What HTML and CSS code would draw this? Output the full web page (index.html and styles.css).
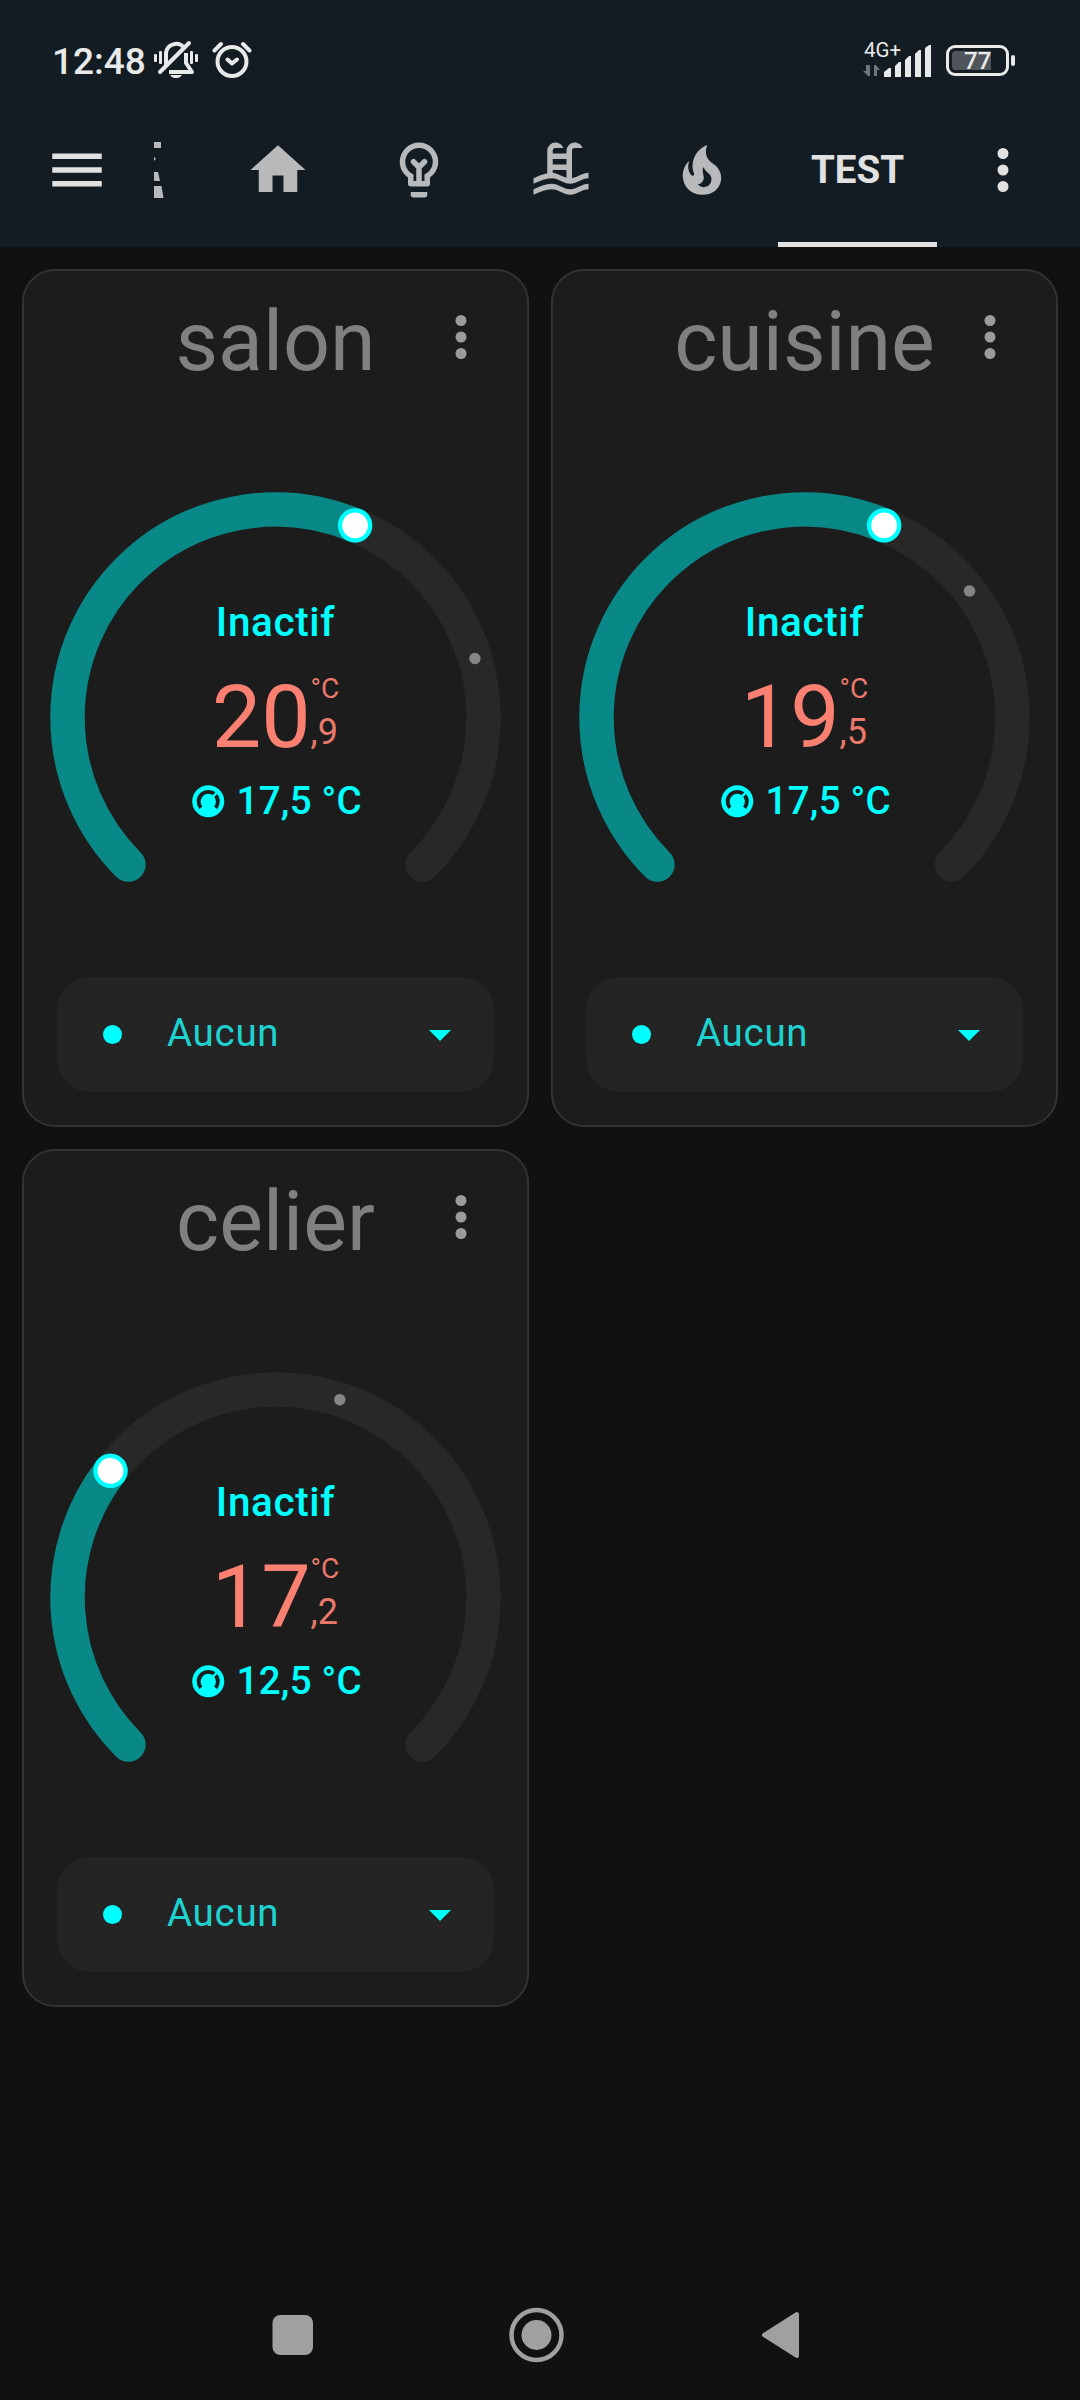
FILE: index.html
```html
<!DOCTYPE html>
<html lang="fr">
<head>
  <meta charset="UTF-8">
  <meta name="viewport" content="width=device-width, initial-scale=1.0">
  <title>Test</title>
  <link rel="stylesheet" href="styles.css">
</head>
<body>
  <header>
    <div class="status-bar">
      <span class="clock">12:48</span>
      <svg class="bell" viewBox="0 0 44 40" width="44" height="40">
        <g fill="none" stroke="#e8eaea" stroke-width="4">
          <path d="M12 25V13a10 10 0 0 1 18-5M32 13v10l6 9H15" stroke-linejoin="round"/>
          <path d="M6 32L35 3" stroke-linecap="round"/>
        </g>
        <g fill="#e8eaea">
          <rect x="0" y="14" width="3" height="8" rx="1"/>
          <rect x="5" y="11" width="3" height="13" rx="1"/>
          <rect x="36" y="11" width="3" height="13" rx="1"/>
          <rect x="41" y="14" width="3" height="8" rx="1"/>
          <path d="M16 35h12a6.500 5 0 0 1-12 0z"/>
        </g>
      </svg>
      <svg class="alarm" viewBox="0 0 40 38" width="40" height="38" fill="none" stroke="#e8eaea" stroke-width="4" stroke-linecap="round" stroke-linejoin="round">
        <circle cx="20" cy="20.500" r="14.500"/>
        <path d="M2.500 9.500L9 3M37.500 9.500L31 3M15.500 18.500l4.500 4 5-4"/>
      </svg>
      <div class="network">
        <span class="network-type">4G+</span>
        <svg viewBox="0 0 68 32" width="68" height="32">
          <path d="M6 20v11h-2l-5-5h3v-6zM10 31V20h2l4 5h-3v6z" fill="#70757b"/>
          <path d="M20 27l5-4h2v9h-7zM31 21l4-4h2v15h-6zM41 15l4-4h2v21h-6zM51 9l4-4h2v27h-6zM61 3l4-3h2v32h-6z" fill="#e8eaea"/>
        </svg>
      </div>
      <div class="battery"><span>77</span></div>
    </div>

    <div class="toolbar">
      <svg class="icon menu" viewBox="0 0 24 24"><path d="M3,6H21V8H3V6M3,11H21V13H3V11M3,16H21V18H3V16Z"/></svg>
      <nav class="tabs">
        <svg class="tab-cut" viewBox="0 0 10 56" width="10" height="56"><path d="M0 0h7v6H0zM0 15l2 1.500L0 19zM0 30h4l2 9H0zM0 44h7.500l2 12H0z"/></svg>
        <a class="tab"><svg class="icon" viewBox="0 0 24 24"><path d="M10,20V14H14V20H19V12H22L12,3L2,12H5V20H10Z"/></svg></a>
        <a class="tab"><svg class="icon" viewBox="0 0 24 24"><path d="M12,2A7,7 0 0,1 19,9C19,11.380 17.810,13.470 16,14.740V17A1,1 0 0,1 15,18H9A1,1 0 0,1 8,17V14.740C6.190,13.470 5,11.380 5,9A7,7 0 0,1 12,2M9,21V20H15V21A1,1 0 0,1 14,22H10A1,1 0 0,1 9,21M12,4A5,5 0 0,0 7,9C7,11.050 8.230,12.810 10,13.580V16H11V11.410L9.290,9.710A1,1 0 0,1 10.710,8.290L12,9.590L13.290,8.290A1,1 0 0,1 14.710,9.710L13,11.410V16H14V13.580C15.770,12.810 17,11.050 17,9A5,5 0 0,0 12,4Z"/></svg></a>
        <a class="tab"><svg class="icon" viewBox="0 0 24 24"><path d="M2,15C3.670,14.250 5.330,13.500 7,13.170V5A3,3 0 0,1 10,2C11.310,2 12.420,2.830 12.830,4H10A1,1 0 0,0 9,5V6H14V5A3,3 0 0,1 17,2C18.310,2 19.420,2.830 19.830,4H17A1,1 0 0,0 16,5V14.940C18,14.620 20,13 22,13V15C19.780,15 17.560,17 15.330,17C13.110,17 10.890,15 8.670,15C6.440,15 4.220,16 2,17V15M14,8H9V10H14V8M14,12H9V13C10.670,13.160 12.330,14.310 14,14.790V12M2,19C4.220,18 6.440,17 8.670,17C10.890,17 13.110,19 15.330,19C17.560,19 19.780,17 22,17V19C19.780,19 17.560,21 15.330,21C13.110,21 10.890,19 8.670,19C6.440,19 4.220,20 2,21V19Z"/></svg></a>
        <a class="tab"><svg class="icon" viewBox="0 0 24 24"><path d="M17.660 11.200C17.430 10.900 17.150 10.640 16.890 10.380C16.220 9.780 15.460 9.350 14.820 8.720C13.330 7.260 13 4.850 13.950 3C13 3.230 12.170 3.750 11.460 4.320C8.870 6.400 7.850 10.070 9.070 13.220C9.110 13.320 9.150 13.420 9.150 13.550C9.150 13.770 9 13.970 8.800 14.050C8.570 14.150 8.330 14.090 8.140 13.930C8.080 13.880 8.040 13.830 8 13.760C6.870 12.330 6.690 10.280 7.450 8.640C5.780 10 4.870 12.300 5 14.470C5.060 14.970 5.120 15.470 5.290 15.970C5.430 16.570 5.700 17.170 6 17.700C7.080 19.430 8.950 20.670 10.960 20.920C13.100 21.190 15.390 20.800 17.030 19.320C18.860 17.660 19.500 15 18.560 12.720L18.430 12.460C18.220 12 17.660 11.200 17.660 11.200M14.500 17.500C14.220 17.740 13.760 18 13.400 18.100C12.280 18.500 11.160 17.940 10.500 17.280C11.690 17 12.400 16.120 12.610 15.230C12.780 14.430 12.460 13.770 12.330 13C12.210 12.260 12.230 11.630 12.500 10.940C12.690 11.320 12.890 11.700 13.130 12C13.900 13 15.110 13.440 15.370 14.800C15.410 14.940 15.430 15.080 15.430 15.230C15.460 16.050 15.100 16.950 14.500 17.500H14.500Z"/></svg></a>
        <a class="tab active">TEST</a>
      </nav>
      <svg class="icon more" viewBox="0 0 24 24"><path d="M12,16A2,2 0 0,1 14,18A2,2 0 0,1 12,20A2,2 0 0,1 10,18A2,2 0 0,1 12,16M12,10A2,2 0 0,1 14,12A2,2 0 0,1 12,14A2,2 0 0,1 10,12A2,2 0 0,1 12,10M12,4A2,2 0 0,1 14,6A2,2 0 0,1 12,8A2,2 0 0,1 10,6A2,2 0 0,1 12,4Z"/></svg>
    </div>
  </header>

  <main id="cards"></main>

  <footer class="nav-bar">
    <svg viewBox="0 0 540 60" width="540" height="60" fill="#a0a0a0">
      <rect x="2.500" y="10" width="40.500" height="40" rx="8"/>
      <circle cx="266.500" cy="30" r="25" fill="none" stroke="#a0a0a0" stroke-width="4.500"/>
      <circle cx="266.500" cy="30" r="15"/>
      <path d="M494 30L527 9V51Z" stroke="#a0a0a0" stroke-width="4" stroke-linejoin="round"/>
    </svg>
  </footer>

  <script src="script.js"></script>
</body>
</html>
```
FILE: styles.css
```css
* {
    box-sizing: border-box;
}

body {
    font-family: Roboto, sans-serif;
    background-color: #111111;
    margin: 0;
    height: 2400px;
    display: flex;
    flex-direction: column;
}

svg {
    display: block;
    flex-shrink: 0;
}

header {
    background-color: #141c23;
    color: #e1e1e1;
    height: 247px;
}

/* phone status bar */
.status-bar {
    height: 93px;
    padding: 27px 64px 0 52px;
    display: flex;
    align-items: center;
    color: #e8eaea;
}

.clock {
    font-size: 37px;
    font-weight: 500;
    width: 102px;
    padding-top: 3px;
}

.alarm {
    margin-left: 14px;
}

.network {
    margin-left: auto;
    width: 68px;
    height: 38px;
    position: relative;
}

.network-type {
    position: absolute;
    top: -1px;
    left: 0;
    font-size: 20.500px;
    line-height: 20px;
}

.network svg {
    margin-top: 4px;
    overflow: visible;
}

.battery {
    position: relative;
    width: 63px;
    height: 31px;
    margin-left: 14px;
    margin-right: 7px;
    padding: 3px;
    border: 3px solid #e8eaea;
    border-radius: 9px;
}

.battery span {
    display: block;
    width: 39px;
    height: 19px;
    padding-left: 12px;
    border-radius: 4px 0 0 4px;
    background-color: #50555b;
    font-size: 24px;
    font-weight: 500;
    line-height: 20px;
}

.battery::after {
    content: "";
    position: absolute;
    right: -9px;
    top: 7px;
    width: 4px;
    height: 11px;
    border-radius: 2px;
    background-color: #e8eaea;
}

/* toolbar */
.toolbar {
    height: 154px;
    display: flex;
    align-items: center;
    padding: 0 44px;
}

.icon {
    width: 66px;
    height: 66px;
    fill: currentColor;
}

.tabs {
    flex: 1;
    height: 154px;
    margin-left: 44px;
    display: flex;
    align-items: center;
}

.tab-cut {
    fill: #b7b9bb;
    margin-right: 43px;
}

.tab {
    width: 141.500px;
    height: 154px;
    display: flex;
    align-items: center;
    justify-content: center;
    color: #b7b9bb;
}

.tab.active {
    width: 159px;
    margin-left: 5px;
    color: #e1e1e1;
    font-size: 38.500px;
    font-weight: 700;
    border-bottom: 5px solid #e1e1e1;
    padding-top: 3px;
}

/* thermostat cards */
main {
    display: grid;
    grid-template-columns: repeat(2, 507px);
    gap: 22px;
    padding: 22px;
}

.card {
    height: 858px;
    background-color: #1c1c1c;
    border: 2px solid #333333;
    border-radius: 33px;
    padding: 0 33px;
    display: flex;
    flex-direction: column;
    position: relative;
}

.card h2 {
    margin: 21px 0 0;
    height: 100px;
    font-size: 82.500px;
    font-weight: 400;
    line-height: 100px;
    text-align: center;
    color: #808080;
}

.card .more {
    position: absolute;
    right: 33px;
    top: 33px;
    color: #9b9b9b;
}

.dial {
    width: 459px;
    height: 459px;
    margin: 96px -11px 0;
    display: grid;
}

.dial > * {
    grid-area: 1 / 1;
}

.track, .value {
    fill: none;
    stroke: #282828;
    stroke-width: 24;
    stroke-linecap: round;
}

.value {
    stroke: #098888;
}

.info {
    display: flex;
    flex-direction: column;
    align-items: center;
    color: #00ffff;
    font-weight: 500;
}

.state {
    margin-top: 110px;
    font-size: 40.500px;
    line-height: 48px;
    letter-spacing: 0.600px;
}

.current {
    display: flex;
    margin-top: 12px;
    height: 96px;
    color: #fa8072;
    font-weight: 400;
}

.current .whole {
    font-size: 88px;
    line-height: 118px;
}

.current .side {
    display: flex;
    flex-direction: column;
    opacity: 0.93;
    margin-top: 15px;
}

.unit {
    font-size: 28px;
    line-height: 32px;
}

.decimal {
    font-size: 36px;
    line-height: 54px;
}

.target {
    display: flex;
    align-items: center;
    gap: 9px;
    margin-top: 24px;
    font-size: 38.500px;
    line-height: 46px;
    letter-spacing: 0.250px;
}

.target svg {
    width: 38.500px;
    height: 38.500px;
}

.select {
    height: 115px;
    margin-top: 30px;
    padding: 0 43px 0 46px;
    border-radius: 33px;
    background-color: #242424;
    display: flex;
    align-items: center;
    color: #1fd2d2;
    font-size: 38.500px;
    letter-spacing: 0.700px;
}

.select .dot {
    width: 19px;
    height: 19px;
    margin-right: 45px;
    border-radius: 50%;
    background-color: #00ffff;
}

.select .label {
    padding-bottom: 4px;
}

.select .arrow {
    margin-left: auto;
    margin-top: 2px;
    border: 11.500px solid transparent;
    border-top-color: #00ffff;
    border-bottom: 0;
}

.nav-bar {
    margin-top: auto;
    height: 95px;
    padding-left: 270px;
}
```
FILE: script.js
```js
const MIN = 7;
const MAX = 25;

const rooms = [
  { name: 'salon', current: 20.9, target: 17.5 },
  { name: 'cuisine', current: 19.5, target: 17.5 },
  { name: 'celier', current: 17.2, target: 12.5 }
];

// 270 degree dial, 0 is the bottom left end
const angle = t => (t - MIN) / (MAX - MIN) * 270;
const format = t => t.toFixed(1).replace('.', ',');
const arc = 'M57.47 262.53A145 145 0 1 1 262.53 262.53';

document.getElementById('cards').innerHTML = rooms.map(room => {
  const [whole, decimal] = format(room.current).split(',');
  return `
  <section class="card">
    <h2>${room.name}</h2>
    <svg class="icon more" viewBox="0 0 24 24"><circle cx="12" cy="6" r="2"/><circle cx="12" cy="12" r="2"/><circle cx="12" cy="18" r="2"/></svg>
    <div class="dial">
      <svg viewBox="0 0 320 320">
        <path class="track" d="${arc}"/>
        <path class="value" d="${arc}" pathLength="270" stroke-dasharray="${angle(room.target)} 400"/>
        <circle cx="160" cy="15" r="4" fill="#858585" transform="rotate(${angle(room.current) - 135} 160 160)"/>
        <g transform="rotate(${angle(room.target) - 135} 160 160)">
          <circle cx="160" cy="15" r="12" fill="#00ffff"/>
          <circle cx="160" cy="15" r="9" fill="#ffffff"/>
        </g>
      </svg>
      <div class="info">
        <div class="state">Inactif</div>
        <div class="current">
          <span class="whole">${whole}</span>
          <span class="side"><span class="unit">°C</span><span class="decimal">,${decimal}</span></span>
        </div>
        <div class="target">
          <svg viewBox="0 0 24 24">
            <circle cx="12" cy="12" r="10" fill="#00ffff"/>
            <path d="M7.400 16A6 6 0 1 1 16.600 16" fill="none" stroke="#1c1c1c" stroke-width="2.400"/>
            <path d="M12 12L17.500 6.500" stroke="#00ffff" stroke-width="1.500"/>
            <circle cx="12" cy="12" r="4" fill="#00ffff"/>
          </svg>
          <span>${format(room.target)} °C</span>
        </div>
      </div>
    </div>
    <div class="select"><span class="dot"></span><span class="label">Aucun</span><span class="arrow"></span></div>
  </section>`;
}).join('');
```
